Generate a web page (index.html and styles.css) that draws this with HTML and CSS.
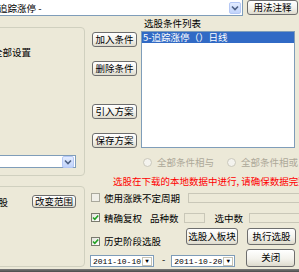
FILE: index.html
```html
<!DOCTYPE html>
<html lang="zh">
<head>
  <meta charset="UTF-8" />
  <title>条件选股</title>
  <link rel="stylesheet" href="styles.css">
</head>
<body>
  <div class="top">
    <div class="combo top-combo">
      <span>追踪涨停 -</span>
      <i class="drop"><svg width="8" height="6" viewBox="0 0 8 6"><path d="M1 1.5 L4 4.5 L7 1.5" fill="none" stroke="#4d6185" stroke-width="1.6"/></svg></i>
    </div>
    <button class="btn help">用法注释</button>
  </div>

  <div class="main">
    <div class="left">
      <div class="group g1">
        <div class="g1-label">全部设置</div>
        <div class="combo g1-combo">
          <i class="drop"><svg width="8" height="6" viewBox="0 0 8 6"><path d="M1 1.5 L4 4.5 L7 1.5" fill="none" stroke="#4d6185" stroke-width="1.6"/></svg></i>
        </div>
      </div>
      <div class="group g2">
        <div class="g2-row">
          <span class="g2-label">选股</span>
          <button class="btn range">改变范围</button>
        </div>
      </div>
    </div>

    <div class="right">
      <div class="upper">
        <div class="actions">
          <button class="btn act">加入条件</button>
          <button class="btn act del">删除条件</button>
          <button class="btn act load">引入方案</button>
          <button class="btn act save">保存方案</button>
        </div>
        <div class="list-wrap">
          <div class="list-label">选股条件列表</div>
          <div class="list">
            <div class="item selected">5-追踪涨停（）日线</div>
          </div>
        </div>
      </div>

      <div class="radios">
        <i class="radio r1"></i><span class="radio-label">全部条件相与</span>
        <i class="radio r2"></i><span class="radio-label">全部条件相或</span>
      </div>

      <div class="warn">选股在下载的本地数据中进行, 请确保数据完整</div>

      <div class="row row1">
        <i class="check off"></i>
        <span class="lbl">使用涨跌不定周期</span>
        <span class="field wide"></span>
      </div>

      <div class="row row2">
        <i class="check"><svg width="7" height="7" viewBox="0 0 7 7"><path d="M1 3.5 L2.8 5.3 L6.2 1.5" fill="none" stroke="#21a121" stroke-width="1.6"/></svg></i>
        <span class="lbl">精确复权</span>
        <span class="lbl count">品种数</span>
        <span class="field small"></span>
        <span class="lbl picked">选中数</span>
        <span class="field wide picked-field"></span>
      </div>

      <div class="row row3">
        <i class="check"><svg width="7" height="7" viewBox="0 0 7 7"><path d="M1 3.5 L2.8 5.3 L6.2 1.5" fill="none" stroke="#21a121" stroke-width="1.6"/></svg></i>
        <span class="lbl">历史阶段选股</span>
        <button class="btn tall to-block">选股入板块</button>
        <button class="btn tall run">执行选股</button>
      </div>

      <div class="row row4">
        <div class="date d1"><span>2011-10-10</span><i class="date-drop">▼</i></div>
        <span class="dash">-</span>
        <div class="date"><span>2011-10-20</span><i class="date-drop">▼</i></div>
        <button class="btn close">关闭</button>
      </div>
    </div>
  </div>

  <div class="taskbar"></div>
</body>
</html>
```

FILE: styles.css
```css
body {
  margin: 0;
  width: 299px;
  height: 272px;
  overflow: hidden;
  background: #ece9d8;
  font-family: "Noto Sans CJK SC", "Noto Sans", sans-serif;
  font-size: 9.5px;
  color: #000;
}

.top {
  display: flex;
  height: 16px;
}

.combo {
  display: flex;
  align-items: center;
  box-sizing: border-box;
  background: #fff;
  border: 1px solid #7f9db9;
}
.top-combo {
  flex: 1;
  height: 16px;
  margin-left: -10px;
  padding-left: 7px;
  border-top: none;
}
.drop {
  display: flex;
  align-items: center;
  justify-content: center;
  box-sizing: border-box;
  width: 12px;
  height: 12px;
  margin-left: auto;
  margin-right: 1px;
  background: linear-gradient(#e3ecff, #c1d3fb);
  border: 1px solid #b5c8f5;
  border-radius: 2px;
}

.btn {
  font: inherit;
  padding: 0;
  color: #000;
  box-sizing: border-box;
  border: 1px solid #6e6e6e;
  border-radius: 3px;
  background: linear-gradient(#ffffff, #f3f2ec 55%, #dedbcd);
  line-height: 1;
  white-space: nowrap;
}
.help {
  width: 51px;
  height: 15px;
  margin-left: 4px;
  margin-right: 1px;
}

.main {
  display: flex;
  height: 253px;
}

.left {
  width: 85px;
  flex-shrink: 0;
}
.group {
  box-sizing: border-box;
  width: 105px;
  margin-left: -20px;
  border: 1px solid #d0d0bf;
  border-radius: 4px;
}
.g1 {
  display: flex;
  flex-direction: column;
  height: 149px;
  margin-top: 11px;
}
.g1-label {
  margin-top: 18px;
  padding-left: 12px;
  line-height: 12px;
  white-space: nowrap;
}
.g1-combo {
  height: 13px;
  margin-top: auto;
  margin-right: 8px;
  margin-bottom: 7px;
  border-left: none;
}
.g2 {
  height: 81px;
  margin-top: 10px;
}
.g2-row {
  display: flex;
  align-items: center;
  height: 13px;
  margin-top: 8px;
  padding-left: 8px;
}
.range {
  width: 44px;
  height: 13px;
  margin-left: 24px;
}

.right {
  width: 214px;
  display: flex;
  flex-direction: column;
}
.upper {
  display: flex;
  height: 132px;
}
.actions {
  display: flex;
  flex-direction: column;
  width: 45px;
  margin-left: 7px;
  padding-top: 16px;
}
.act {
  height: 15px;
}
.del, .save {
  margin-top: 14px;
}
.load {
  margin-top: 28px;
}
.list-wrap {
  width: 154px;
  margin-left: 4px;
  padding-top: 1px;
}
.list-label {
  height: 14px;
  line-height: 12px;
  padding-left: 3px;
}
.list {
  box-sizing: border-box;
  height: 117px;
  background: #fff;
  border: 1px solid #7f9db9;
}
.item {
  height: 11px;
  line-height: 11px;
  padding-left: 1px;
  white-space: nowrap;
}
.selected {
  background: #316ac5;
  color: #fff;
}

.radios {
  display: flex;
  align-items: center;
  height: 12px;
  margin-top: 8px;
  color: #aca899;
}
.radio {
  box-sizing: border-box;
  width: 9px;
  height: 9px;
  border: 1px solid #cac8bb;
  border-radius: 50%;
  background: #f4f3ee;
}
.r1 {
  margin-left: 58px;
}
.r2 {
  margin-left: 13px;
}
.radio-label {
  margin-left: 5px;
}

.warn {
  height: 12px;
  line-height: 12px;
  margin-top: 7px;
  padding-left: 28px;
  color: #f00;
  white-space: nowrap;
}

.row {
  display: flex;
  align-items: center;
  white-space: nowrap;
}
.row1 {
  height: 13px;
  margin-top: 4px;
}
.row2 {
  height: 13px;
  margin-top: 7px;
}
.row3 {
  height: 17px;
  margin-top: 4px;
  align-items: flex-start;
}
.row4 {
  height: 18px;
  margin-top: 4px;
}

.check {
  display: flex;
  align-items: center;
  justify-content: center;
  box-sizing: border-box;
  width: 9px;
  height: 9px;
  margin-left: 6px;
  border: 1px solid #7a7a6e;
  background: linear-gradient(135deg, #e4e3dc, #fff);
}
.check.off {
  border-color: #a9a89c;
  background: #f0efe8;
}
.lbl {
  margin-left: 4px;
  line-height: 12px;
}
.field {
  box-sizing: border-box;
  height: 10px;
  border: 1px solid #c9c7b8;
  background: #ece9d8;
}
.wide {
  flex: 1;
  margin-left: 8px;
  margin-right: -5px;
}
.count {
  margin-left: 8px;
}
.small {
  width: 21px;
  margin-left: 5px;
}
.picked {
  margin-left: 10px;
}
.picked-field {
  margin-left: 6px;
}

.row3 .check {
  margin-top: 9px;
}
.row3 .lbl {
  margin-top: 7px;
}
.tall {
  height: 17px;
}
.to-block {
  width: 52px;
  margin-left: 25px;
}
.run {
  width: 49px;
  margin-left: 9px;
}

.date {
  display: flex;
  align-items: center;
  align-self: flex-end;
  box-sizing: border-box;
  width: 64px;
  height: 12px;
  padding-left: 2px;
  background: #fff;
  border: 1px solid #7f9db9;
  font-family: "Liberation Mono", monospace;
  font-size: 8px;
}
.d1 {
  margin-left: 5px;
}
.date-drop {
  display: flex;
  align-items: center;
  justify-content: center;
  box-sizing: border-box;
  width: 10px;
  height: 9px;
  margin-left: auto;
  margin-right: 1px;
  border: 1px solid #c4c2b4;
  font-style: normal;
  font-size: 6px;
}
.dash {
  align-self: flex-end;
  margin: 0 6px 2px 8px;
  line-height: 12px;
}
.close {
  width: 49px;
  height: 18px;
  margin-left: 11px;
}

.taskbar {
  height: 3px;
  background: linear-gradient(#7a7a7a, #4a4a4a);
}
```
